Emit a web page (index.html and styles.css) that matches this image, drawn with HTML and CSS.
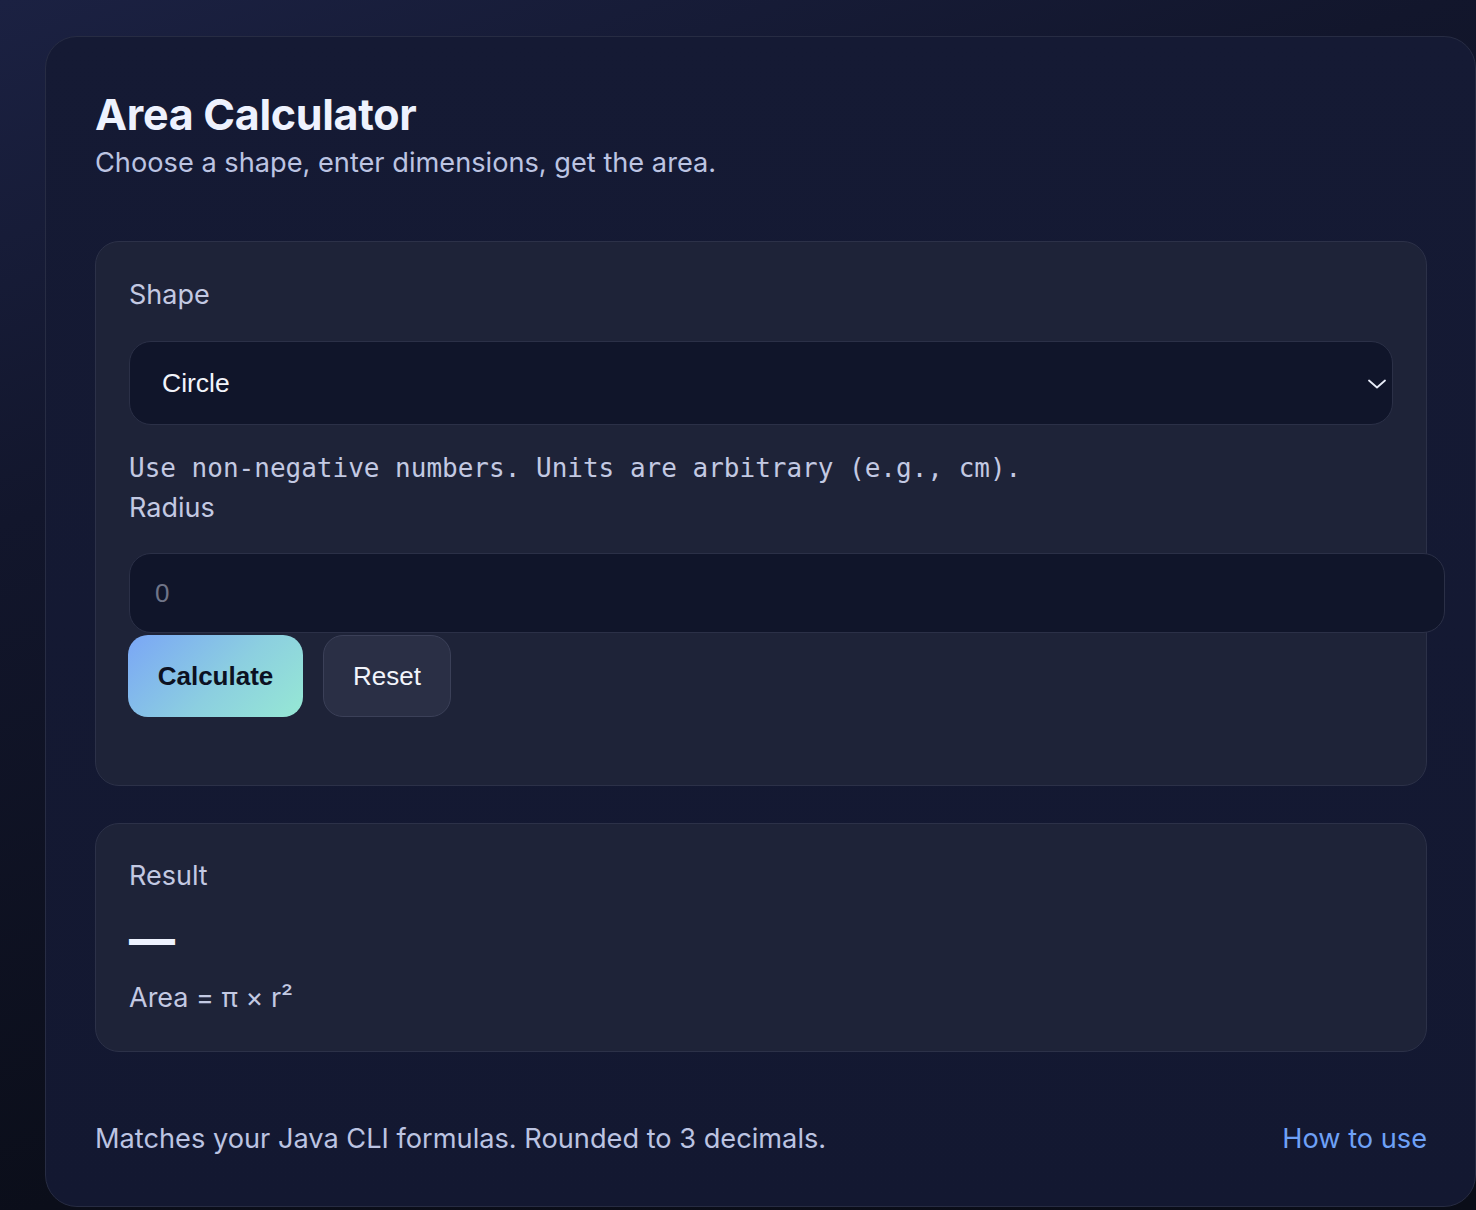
FILE: index.html
```html
<!DOCTYPE html>
<html lang="en">
<head>
<meta charset="utf-8">
<title>Area Calculator</title>
<link rel="stylesheet" href="styles.css">
</head>
<body>
<main class="card">
  <h1 class="title">Area Calculator</h1>
  <p class="subtitle">Choose a shape, enter dimensions, get the area.</p>

  <section class="panel form-panel">
    <label class="label" for="shape">Shape</label>
    <div class="select-wrap">
      <select id="shape" class="select">
        <option>Circle</option>
        <option>Rectangle</option>
        <option>Triangle</option>
      </select>
      <svg class="chevron" width="18" height="10" viewBox="0 0 18 10" aria-hidden="true">
        <path d="M1 1.5 L9 8.5 L17 1.5" fill="none" stroke="#e8ecf8" stroke-width="1.8" stroke-linecap="round" stroke-linejoin="round"/>
      </svg>
    </div>
    <p class="hint">Use non-negative numbers. Units are arbitrary (e.g., cm).</p>
    <label class="label" for="radius">Radius</label>
    <input id="radius" class="input" type="number" placeholder="0">
    <div class="actions">
      <button class="btn btn-primary" type="button">Calculate</button>
      <button class="btn btn-secondary" type="button">Reset</button>
    </div>
  </section>

  <section class="panel result-panel">
    <div class="label">Result</div>
    <div class="result-value">—</div>
    <div class="formula">Area = π × r²</div>
  </section>

  <footer class="footer">
    <span>Matches your Java CLI formulas. Rounded to 3 decimals.</span>
    <a class="link" href="#">How to use</a>
  </footer>
</main>
</body>
</html>
```

FILE: styles.css
```css
html, body {
  margin: 0;
  padding: 0;
}

body {
  min-height: 1210px;
  font-family: Inter, "Noto Sans", sans-serif;
  color: #c3c9e2;
  background: linear-gradient(160deg, #1b2142 0%, #12162c 30%, #0b0e1a 70%, #0a0d18 100%);
  overflow: hidden;
}

.card {
  box-sizing: border-box;
  width: 1431px;
  margin: 36px 0 0 45px;
  padding: 50px 48px 50px 49px;
  background: linear-gradient(180deg, #151a34 0%, #131831 100%);
  border: 1px solid #272c43;
  border-radius: 32px;
}

.title {
  margin: 0;
  font-size: 43px;
  line-height: 54px;
  font-weight: 700;
  letter-spacing: -0.3px;
  color: #eef2fe;
}

.subtitle {
  margin: 5px 0 0;
  font-size: 27.2px;
  line-height: 34px;
  color: #bcc4e2;
}

.panel {
  background: #1e2338;
  border: 1px solid #2c3148;
  border-radius: 24px;
  padding: 33px;
}

.form-panel {
  margin-top: 61px;
  padding-top: 36px;
  padding-bottom: 68px;
}

.result-panel {
  margin-top: 37px;
  padding-top: 35px;
  padding-bottom: 36px;
}

.label {
  display: block;
  font-size: 27px;
  line-height: 34px;
  color: #c3c9e2;
}

.select-wrap {
  position: relative;
  margin-top: 29px;
}

.select {
  display: block;
  width: 100%;
  height: 84px;
  box-sizing: border-box;
  appearance: none;
  -webkit-appearance: none;
  background: #10152a;
  border: 1px solid #2b3047;
  border-radius: 22px;
  padding: 0 32px;
  font-family: "Liberation Sans", Arial, sans-serif;
  font-size: 26.5px;
  color: #f2f4fb;
}

.chevron {
  position: absolute;
  right: 7px;
  top: 38px;
}

.hint {
  margin: 20px 0 0;
  font-family: "DejaVu Sans Mono", monospace;
  font-size: 26px;
  line-height: 46px;
  color: #c3c9e2;
}

.input {
  display: block;
  width: 100%;
  height: 30px;
  margin-top: 28px;
  padding: 24px 25px;
  background: #10152a;
  border: 1px solid #2b3047;
  border-radius: 22px;
  font-family: "Liberation Sans", Arial, sans-serif;
  font-size: 26px;
  color: #f2f4fb;
}

.input::placeholder {
  color: #6f7488;
}

.actions {
  display: flex;
  gap: 20px;
  margin-top: 2px;
}

.btn {
  height: 82px;
  border-radius: 20px;
  font-family: "Liberation Sans", Arial, sans-serif;
  font-size: 26px;
  padding: 0 27px;
}

.btn-primary {
  margin-left: -1px;
  width: 175px;
  border: none;
  font-weight: 700;
  color: #0c1122;
  background: linear-gradient(135deg, #7aa6f6 0%, #8ccfe0 55%, #96e8d4 100%);
}

.btn-secondary {
  width: 128px;
  border: 1px solid #3b4058;
  color: #f2f4fb;
  background: #2a2f45;
}

.result-value {
  margin-top: 18px;
  font-size: 46px;
  line-height: 56px;
  font-weight: 800;
  color: #eef2fe;
}

.formula {
  margin-top: 14px;
  font-size: 27px;
  line-height: 34px;
  color: #c3c9e2;
}

.footer {
  display: flex;
  justify-content: space-between;
  align-items: baseline;
  margin-top: 70px;
  font-size: 27.2px;
  line-height: 34px;
  color: #bcc4e2;
}

.link {
  color: #6ea1f7;
  text-decoration: none;
}
```
